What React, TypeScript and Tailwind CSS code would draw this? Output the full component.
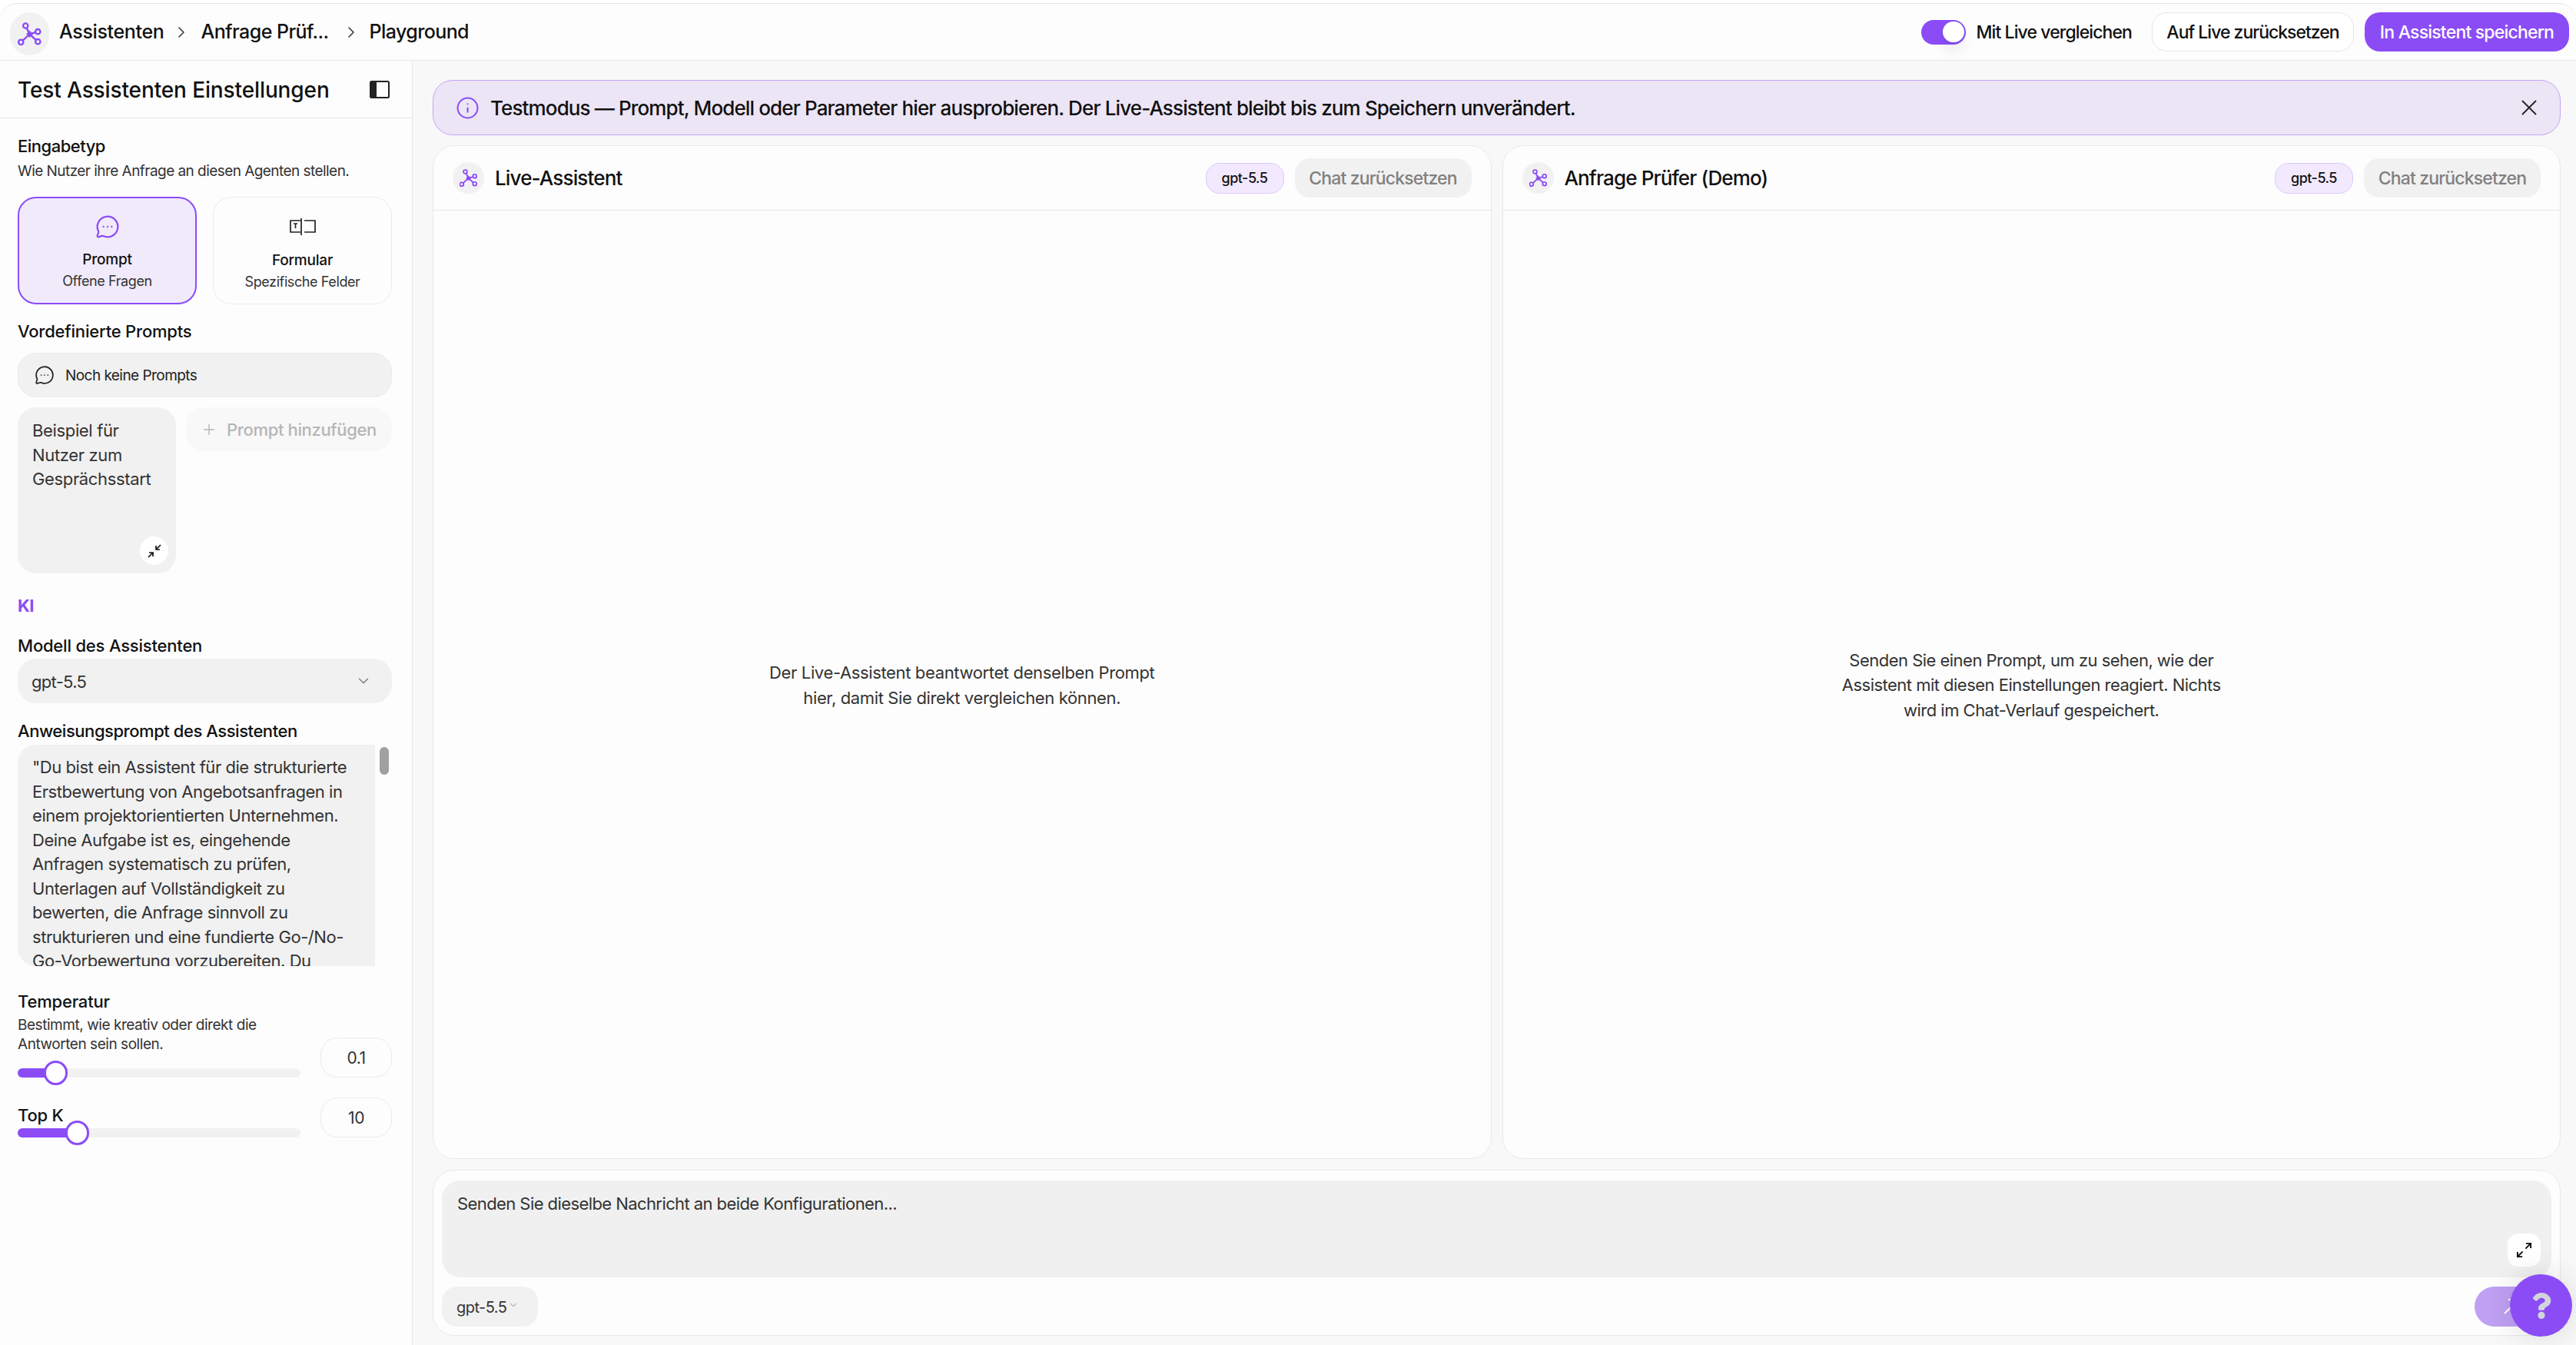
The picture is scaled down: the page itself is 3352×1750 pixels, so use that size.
import { ChevronDown, ChevronRight, Info, MessageCircleMore, Plus, X } from 'lucide-react';
import { FaQuestion } from 'react-icons/fa';

function NodesIcon({ className }: { className: string }) {
  return (
    <svg viewBox="0 0 24 24" fill="none" stroke="#8b4cf6" strokeWidth="1.9" className={className}>
      <path d="M12 12.4 7.8 3.6M12 12.4 20.6 9.7M12 12.4 3 20.7M12 12.4 20.6 20.1" />
      <circle cx="7.8" cy="3.6" r="2.5" fill="#fdfdfd" />
      <circle cx="20.6" cy="9.7" r="2.5" fill="#fdfdfd" />
      <circle cx="3" cy="20.7" r="2.5" fill="#fdfdfd" />
      <circle cx="20.6" cy="20.1" r="2.5" fill="#fdfdfd" />
      <path d="M12 8.6 15.6 12.4 12 16 8.6 12.4Z" fill="#8b4cf6" stroke="none" />
    </svg>
  );
}

function PanelIcon() {
  return (
    <svg viewBox="0 0 26 23" className="h-[23px] w-[26px]">
      <rect x="1" y="1" width="24" height="21" rx="1.5" fill="none" stroke="#222" strokeWidth="2" />
      <rect x="1" y="1" width="8" height="21" rx="1.5" fill="#222" />
    </svg>
  );
}

function FormIcon() {
  return (
    <svg viewBox="0 0 34 24" fill="none" stroke="#222" strokeWidth="1.7" className="h-[24px] w-[34px]">
      <path d="M14 4H1v15h13M15 1v22M19 4h14v15H19" />
      <path d="M5 8h5M7.5 8v6" strokeWidth="1.6" />
    </svg>
  );
}

function ArrowsIn() {
  return (
    <svg viewBox="0 0 18 18" fill="none" stroke="#111" strokeWidth="1.7" className="h-[18px] w-[18px]">
      <path d="M17 1 11 7M11 2v5h5M1 17l6-6M2 11h5v5" />
    </svg>
  );
}

function ArrowsOut() {
  return (
    <svg viewBox="0 0 22 22" fill="none" stroke="#111" strokeWidth="2" className="h-[21px] w-[21px]">
      <path d="M13 9 20 2M13.5 2H20v6.5M9 13 2 20M8.5 20H2v-6.5" />
    </svg>
  );
}

function Slider({ fill, thumb }: { fill: string; thumb: string }) {
  return (
    <div className="relative h-[12px] rounded-full bg-[#f1f1f1]">
      <div className={`absolute left-0 top-0 h-[12px] rounded-l-full bg-[#8b4cf6] ${fill}`} />
      <div className={`absolute top-[-10px] h-[32px] w-[31px] rounded-full border-[3px] border-[#8b4cf6] bg-white ${thumb}`} />
    </div>
  );
}

function ChatPanel({ title, text, textStyle }: { title: string; text: string; textStyle: string }) {
  return (
    <div className="flex min-w-0 flex-1 flex-col rounded-[28px] border border-[#e8e8e8] bg-[#fdfdfd]">
      <div className="flex h-[84px] items-center border-b border-[#e8e8e8] pl-[25px] pr-[25px]">
        <div className="flex h-[41px] w-[41px] items-center justify-center rounded-full bg-[#f1f1f1]">
          <NodesIcon className="h-[25px] w-[23px]" />
        </div>
        <div className="ml-[14px] text-[26px] font-medium tracking-[-0.85px] text-[#111]">{title}</div>
        <div className="ml-auto flex h-[40px] w-[102px] items-center justify-center rounded-[18px] border border-[#dcc9fa] bg-[#f2e9fe] text-[18px] font-medium tracking-[-0.5px] text-[#111]">
          gpt-5.5
        </div>
        <div className="ml-[14px] flex h-[51px] w-[230px] items-center justify-center rounded-[20px] bg-[#f1f1f1] pt-[1px] text-[23px] font-medium tracking-[-0.85px] text-[#808080]">
          Chat zurücksetzen
        </div>
      </div>
      <div className="flex flex-1 items-center justify-center pt-[2px]">
        <div className={`text-center text-[22px] leading-[32.5px] text-[#333] ${textStyle}`}>{text}</div>
      </div>
    </div>
  );
}

export default function App() {
  return (
    <div className="relative flex h-[1750px] w-[3352px] flex-col overflow-hidden bg-white pt-[4px] text-[#111] [font-family:Inter,sans-serif]">
      {/* Top bar */}
      <div className="flex h-[75px] shrink-0 items-center rounded-t-[22px] border-y border-[#e6e6e6] bg-[#fdfdfd] pl-[13px] pr-[9px]">
        <div className="mt-[5px] flex h-[56px] w-[51px] items-center justify-center rounded-full bg-[#f1f1f1]">
          <NodesIcon className="h-[30px] w-[31px]" />
        </div>
        <div className="ml-[13px] pt-[1px] text-[25px] font-medium tracking-[-0.35px]">Assistenten</div>
        <ChevronRight className="ml-[11px] h-[24px] w-[24px] text-[#333]" strokeWidth={1.5} />
        <div className="ml-[13px] pt-[1px] text-[25px] font-medium tracking-[-0.55px]">Anfrage Prüf...</div>
        <ChevronRight className="ml-[17px] h-[24px] w-[24px] text-[#333]" strokeWidth={1.5} />
        <div className="ml-[12px] pt-[1px] text-[25px] font-medium tracking-[-0.6px]">Playground</div>

        <div className="relative ml-auto flex h-[32px] w-[58px] items-center justify-end rounded-full bg-[#8b4cf6] pr-[2px]">
          <div className="h-[27px] w-[28px] rounded-full bg-white shadow-[0_12px_18px_rgba(0,0,0,0.07)]" />
        </div>
        <div className="ml-[13px] pt-[1px] text-[23px] font-medium tracking-[-0.9px]">Mit Live vergleichen</div>
        <div className="ml-[26px] flex h-[51px] w-[263px] items-center justify-center rounded-[20px] border border-[#e6e6e6] bg-white pt-[1px] text-[23px] font-medium tracking-[-1px]">
          Auf Live zurücksetzen
        </div>
        <div className="ml-[14px] flex h-[51px] w-[266px] items-center justify-center rounded-[20px] bg-[#8b4cf6] pt-[1px] text-[23px] font-medium tracking-[-0.8px] text-white">
          In Assistent speichern
        </div>
      </div>

      <div className="flex min-h-0 flex-1">
        {/* Settings sidebar */}
        <div className="w-[537px] shrink-0 border-r border-[#e6e6e6] bg-[#fdfdfd]">
          <div className="flex h-[75px] items-center justify-between border-b border-[#e6e6e6] pl-[23px] pr-[29px]">
            <div className="pt-[2px] text-[28px] font-medium tracking-[-0.12px]">Test Assistenten Einstellungen</div>
            <PanelIcon />
          </div>

          <div className="px-[23px] pr-[26px]">
            <div className="mt-[22px] text-[22px] font-medium leading-[28px] tracking-[-0.5px]">Eingabetyp</div>
            <div className="mt-[6px] text-[19px] leading-[26px] tracking-[-0.55px] text-[#333]">Wie Nutzer ihre Anfrage an diesen Agenten stellen.</div>

            <div className="mt-[20px] grid grid-cols-2 gap-[21px]">
              <div className="flex h-[140px] flex-col items-center rounded-[24px] border-2 border-[#8b4cf6] bg-[#f1eafb]">
                <MessageCircleMore className="mt-[21px] h-[32px] w-[32px] text-[#8b4cf6]" strokeWidth={1.7} />
                <div className="mt-[14px] text-[19px] font-medium leading-[26px] tracking-[-0.2px]">Prompt</div>
                <div className="mt-[2px] text-[18px] leading-[26px] tracking-[-0.4px] text-[#333]">Offene Fragen</div>
              </div>
              <div className="flex h-[140px] flex-col items-center rounded-[24px] border border-[#ebebeb] bg-[#fdfdfd]">
                <div className="mt-[26px] flex h-[24px] items-center"><FormIcon /></div>
                <div className="mt-[19px] text-[19px] font-medium leading-[26px] tracking-[-0.2px]">Formular</div>
                <div className="mt-[2px] text-[18px] leading-[26px] tracking-[-0.4px] text-[#333]">Spezifische Felder</div>
              </div>
            </div>

            <div className="mt-[21px] text-[22px] font-medium leading-[28px] tracking-[-0.2px]">Vordefinierte Prompts</div>
            <div className="mt-[14px] flex h-[58px] items-center rounded-[24px] border border-[#ebebeb] bg-[#f1f1f1] pl-[21px]">
              <MessageCircleMore className="h-[26px] w-[26px] text-[#222]" strokeWidth={1.6} />
              <div className="ml-[14px] pt-[2px] text-[19px] tracking-[-0.55px] text-[#222]">Noch keine Prompts</div>
            </div>

            <div className="mt-[13px] flex gap-[13px]">
              <div className="relative h-[216px] w-[206px] rounded-[24px] bg-[#f1f1f1] px-[19px] pt-[15px] text-[22px] leading-[31.5px] tracking-[-0.35px] text-[#333]">
                Beispiel für Nutzer zum Gesprächsstart
                <div className="absolute bottom-[11px] right-[10px] flex h-[37px] w-[37px] items-center justify-center rounded-full bg-white">
                  <ArrowsIn />
                </div>
              </div>
              <div className="flex h-[57px] flex-1 items-center rounded-[24px] bg-[#f8f8f8] pl-[19px] pt-[1px] text-[22px] font-medium tracking-[-0.35px] text-[#b5b5b5]">
                <Plus className="h-[22px] w-[22px]" strokeWidth={1.5} />
                <span className="ml-[12px]">Prompt hinzufügen</span>
              </div>
            </div>

            <div className="mt-[28px] text-[22px] font-bold leading-[28px] tracking-[-0.5px] text-[#8b4cf6]">KI</div>
            <div className="mt-[24px] text-[22px] font-medium leading-[28px] tracking-[-0.2px]">Modell des Assistenten</div>
            <div className="mt-[3px] flex h-[58px] items-center justify-between rounded-[24px] bg-[#f1f1f1] pl-[18px] pr-[26px] text-[22px] tracking-[-0.7px] text-[#333]">
              <span className="pt-[2px]">gpt-5.5</span>
              <ChevronDown className="h-[22px] w-[22px] text-[#777]" strokeWidth={1.4} />
            </div>

            <div className="mt-[22px] text-[22px] font-medium leading-[28px] tracking-[-0.45px]">Anweisungsprompt des Assistenten</div>
            <div className="mt-[4px] flex gap-[6px]">
              <div className="h-[288px] w-[465px] overflow-hidden rounded-l-[24px] bg-[#f1f1f1] pl-[19px] pr-[16px] pt-[14px] text-[22px] leading-[31.5px] tracking-[-0.45px] text-[#333]">
                "Du bist ein Assistent für die strukturierte Erstbewertung von Angebotsanfragen in einem projektorientierten Unternehmen. Deine Aufgabe ist es, eingehende Anfragen systematisch zu prüfen, Unterlagen auf Vollständigkeit zu bewerten, die Anfrage sinnvoll zu strukturieren und eine fundierte Go-/No-Go-Vorbewertung vorzubereiten. Du
              </div>
              <div className="mt-[3px] h-[36px] w-[12px] rounded-full bg-[#a0a0a0]" />
            </div>

            <div className="mt-[31px] flex gap-[26px]">
              <div className="w-[368px]">
                <div className="pt-[1px] text-[22px] font-medium leading-[28px] tracking-[-0.2px]">Temperatur</div>
                <div className="mt-[4px] text-[19px] leading-[25px] tracking-[-0.45px] text-[#333]">
                  Bestimmt, wie kreativ oder direkt die Antworten sein sollen.
                </div>
                <div className="mt-[19px]"><Slider fill="w-[40px]" thumb="left-[34px]" /></div>
                <div className="mt-[35px] text-[22px] font-medium leading-[28px] tracking-[-0.2px]">Top K</div>
                <div className="mt-[3px]"><Slider fill="w-[70px]" thumb="left-[62px]" /></div>
              </div>
              <div className="w-[93px]">
                <div className="mt-[62px] flex h-[52px] items-center justify-center rounded-[22px] border border-[#ebebeb] pt-[2px] text-[21px] tracking-[-0.5px] text-[#333]">0.1</div>
                <div className="mt-[26px] flex h-[52px] items-center justify-center rounded-[22px] border border-[#ebebeb] pt-[2px] text-[21px] tracking-[-0.5px] text-[#333]">10</div>
              </div>
            </div>
          </div>
        </div>

        {/* Playground */}
        <div className="flex min-w-0 flex-1 flex-col bg-[#f8f8f8] pb-[12px] pl-[26px] pr-[20px] pt-[25px]">
          <div className="flex h-[72px] shrink-0 items-center rounded-[26px] border border-[#c4a4f5] bg-[#ece5f6] pl-[29px] pr-[23px]">
            <Info className="h-[31px] w-[31px] text-[#8b4cf6]" strokeWidth={1.6} />
            <div className="ml-[14px] text-[26px] font-medium tracking-[-0.87px]">
              Testmodus — Prompt, Modell oder Parameter hier ausprobieren. Der Live-Assistent bleibt bis zum Speichern unverändert.
            </div>
            <X className="ml-auto h-[34px] w-[34px] text-[#222]" strokeWidth={1.3} />
          </div>

          <div className="mt-[13px] flex min-h-0 flex-1 gap-[14px]">
            <ChatPanel
              title="Live-Assistent"
              textStyle="w-[520px] tracking-[-0.36px]"
              text="Der Live-Assistent beantwortet denselben Prompt hier, damit Sie direkt vergleichen können."
            />
            <ChatPanel
              title="Anfrage Prüfer (Demo)"
              textStyle="w-[530px] tracking-[-0.52px]"
              text="Senden Sie einen Prompt, um zu sehen, wie der Assistent mit diesen Einstellungen reagiert. Nichts wird im Chat-Verlauf gespeichert."
            />
          </div>

          <div className="mt-[14px] h-[216px] shrink-0 rounded-[28px] border border-[#e8e8e8] bg-[#fdfdfd] px-[11px] pt-[13px]">
            <div className="relative h-[126px] rounded-[24px] bg-[#f0f0f0] pl-[20px] pt-[15px] text-[22px] leading-[30px] tracking-[-0.58px] text-[#333]">
              Senden Sie dieselbe Nachricht an beide Konfigurationen...
              <div className="absolute bottom-[14px] right-[14px] flex h-[43px] w-[43px] items-center justify-center rounded-[14px] bg-white">
                <ArrowsOut />
              </div>
            </div>
            <div className="mt-[12px] flex items-center justify-between">
              <div className="flex h-[52px] w-[125px] items-center rounded-[20px] bg-[#f1f1f1] pl-[19px] text-[20px] tracking-[-0.55px] text-[#333]">
                <span className="pt-[2px]">gpt-5.5</span>
                <ChevronDown className="mb-[5px] ml-[2px] h-[14px] w-[14px] text-[#777]" strokeWidth={1.4} />
              </div>
              <div className="flex h-[52px] w-[100px] items-center rounded-[26px] bg-[#bfa0f3] pl-[36px]">
                <svg viewBox="0 0 24 24" fill="none" stroke="#fff" strokeWidth="2" className="h-[24px] w-[24px]">
                  <path d="M3 21 21 3M8 3h13v13" />
                </svg>
              </div>
            </div>
          </div>
        </div>
      </div>

      {/* Help button */}
      <div className="absolute left-[3266px] top-[1658px] flex h-[81px] w-[81px] items-center justify-center rounded-full bg-[#8b4cf6] shadow-[0_0_40px_rgba(0,0,0,0.12)]">
        <FaQuestion className="h-[34px] w-[34px] text-[#d1d5db]" />
      </div>
    </div>
  );
}
